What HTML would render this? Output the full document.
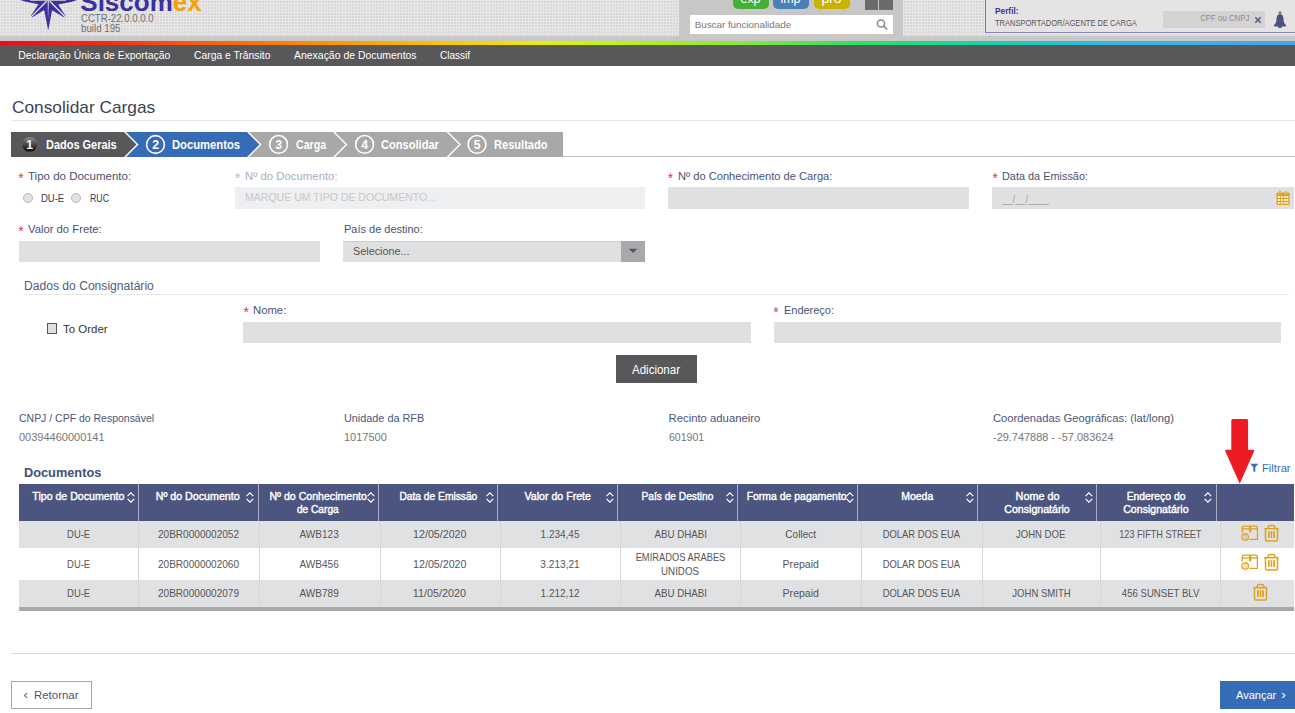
<!DOCTYPE html>
<html><head><meta charset="utf-8"><title>Consolidar Cargas</title>
<style>
html,body{margin:0;padding:0;}
body{width:1295px;height:713px;overflow:hidden;position:relative;background:#fff;font-family:"Liberation Sans",sans-serif;}
.t{position:absolute;white-space:nowrap;line-height:1;}
</style></head><body>
<div style="position:absolute;left:0;top:0;width:1295px;height:36px;background-color:#d8d8d8;background-image:linear-gradient(90deg,#e7e7e7 1px,transparent 1px),linear-gradient(#e7e7e7 1px,transparent 1px);background-size:3px 3px;"></div>
<div style="position:absolute;left:0px;top:36px;width:1295px;height:5px;background:#c9c8c7;"></div>
<div style="position:absolute;left:0px;top:41px;width:1295px;height:4px;background:linear-gradient(90deg,#f00a1a 0%,#f52a12 8%,#fa5010 13%,#ff9000 25%,#fbc000 33%,#f6d800 38%,#eaf000 42%,#c4f800 46%,#a8f018 52%,#80e840 58%,#30e060 66%,#10d8a0 75%,#30b8e0 85%,#42a8ee 100%);"></div>
<div style="position:absolute;left:0px;top:45px;width:1295px;height:21px;background:#58585a;"></div>
<div style="position:absolute;left:679px;top:0px;width:224px;height:36px;background:#c9c7c6;"></div>
<div style="position:absolute;left:733px;top:-8px;width:36px;height:17px;background:#45b035;border-radius:5px;"></div>
<div style="position:absolute;left:773px;top:-8px;width:36px;height:17px;background:#4a80b8;border-radius:5px;"></div>
<div style="position:absolute;left:814px;top:-8px;width:36px;height:17px;background:#c6b400;border-radius:5px;"></div>
<div style="position:absolute;left:865px;top:-5px;width:13px;height:15px;background:#6b6b6b;"></div>
<div style="position:absolute;left:879px;top:-5px;width:14px;height:15px;background:#6b6b6b;"></div>
<div style="position:absolute;left:690px;top:15px;width:203px;height:19px;background:#ffffff;"></div>
<svg style="position:absolute;left:875px;top:17px" width="14" height="14" viewBox="0 0 14 14"><circle cx="6" cy="6.5" r="3.6" fill="none" stroke="#8a8a8a" stroke-width="1.5"/><line x1="8.6" y1="9.1" x2="11.8" y2="12" stroke="#8a8a8a" stroke-width="1.6" stroke-linecap="round"/></svg>
<div style="position:absolute;left:985px;top:0;width:310px;height:33px;background:#e6e3e4;border-left:1px solid #7473ad;border-bottom:1px solid #8584b5;box-sizing:border-box;"></div>
<div style="position:absolute;left:1163px;top:11px;width:102px;height:17px;background:#d4d2d3;"></div>
<svg style="position:absolute;left:1254px;top:16px" width="8" height="8" viewBox="0 0 8 8"><path d="M1.3 1.3L6.7 6.7M6.7 1.3L1.3 6.7" stroke="#5a5a9a" stroke-width="1.6"/></svg>
<svg style="position:absolute;left:1273px;top:11.3px" width="14" height="17" viewBox="0 0 14 17"><circle cx="7" cy="1.9" r="1.1" fill="none" stroke="#4a5580" stroke-width="1"/><path d="M7 3.2C4.4 3.2 3.7 5.3 3.5 7.8L3.2 10.8C3 12.4 1.8 13.1 1.1 13.8C0.5 14.5 0.8 15.6 2 15.6H12C13.2 15.6 13.5 14.5 12.9 13.8C12.2 13.1 11 12.4 10.8 10.8L10.5 7.8C10.3 5.3 9.6 3.2 7 3.2Z" fill="#4a5580"/><ellipse cx="7" cy="15.9" rx="2" ry="1.1" fill="#4a5580"/></svg>
<svg style="position:absolute;left:0;top:0" width="90" height="36" viewBox="0 0 90 36">
<defs><linearGradient id="vh" x1="0" y1="0" x2="0" y2="1"><stop offset="0" stop-color="#fff" stop-opacity="0.95"/><stop offset="1" stop-color="#fff" stop-opacity="0"/></linearGradient></defs>
<path d="M17 -1L26 1.8L38.5 4.3L30.9 15.7L32.4 17.3L44.2 10L48.2 30.5L52.1 10.2L64.2 17.5L65.7 15.9L58.1 4.5L72 1.8L80 -1Z" fill="#3b30a0"/>
<g stroke="#f2f2f2" stroke-width="1.3" opacity="0.95">
<line x1="46.6" y1="1.2" x2="31.4" y2="16.6"/>
<line x1="49.9" y1="1.2" x2="65.1" y2="16.8"/>
</g>
<rect x="47.7" y="0" width="1.1" height="20" fill="url(#vh)"/>
<rect x="30.3" y="0" width="35.7" height="0.9" fill="#c5c5cc"/>
</svg>
<div style="position:absolute;left:11px;top:120px;width:1284px;height:1px;background:#e6e7ec;"></div>
<svg style="position:absolute;left:0;top:0" width="600" height="170" viewBox="0 0 600 170">
<defs><linearGradient id="g1" x1="0" y1="0" x2="0" y2="1"><stop offset="0" stop-color="#8a8a8a"/><stop offset="1" stop-color="#0a0a0a"/></linearGradient></defs>
<polygon points="11,132 124,132 136.5,144.5 124,157 11,157" fill="#58585a"/>
<polygon points="126,132 247,132 259.5,144.5 247,157 126,157 138.5,144.5" fill="#356cb5"/>
<polygon points="249,132 333,132 345.5,144.5 333,157 249,157 261.5,144.5" fill="#a8a8a8"/>
<polygon points="335,132 446.5,132 459,144.5 446.5,157 335,157 347.5,144.5" fill="#a8a8a8"/>
<polygon points="448.5,132 563,132 563,157 448.5,157 461,144.5" fill="#a8a8a8"/>
<rect x="22.3" y="137" width="14.8" height="14.6" rx="6.5" fill="url(#g1)"/>
<circle cx="155.5" cy="144.5" r="8.9" fill="none" stroke="#fff" stroke-width="1.6"/>
<circle cx="278.6" cy="144.4" r="8.9" fill="none" stroke="#fff" stroke-width="1.6"/>
<circle cx="364.6" cy="144.4" r="8.9" fill="none" stroke="#fff" stroke-width="1.6"/>
<circle cx="477" cy="144.4" r="8.9" fill="none" stroke="#fff" stroke-width="1.6"/>
</svg>
<div style="position:absolute;left:563px;top:156px;width:732px;height:1px;background:#c0c0c0;"></div>
<div style="position:absolute;left:23px;top:193px;width:10px;height:10px;border-radius:50%;background:#e2e2e2;border:1px solid #b5b5b5;box-sizing:border-box;"></div>
<div style="position:absolute;left:70.5px;top:193px;width:10px;height:10px;border-radius:50%;background:#e2e2e2;border:1px solid #b5b5b5;box-sizing:border-box;"></div>
<div style="position:absolute;left:235px;top:187px;width:410px;height:22px;background:#eeeff1;"></div>
<div style="position:absolute;left:668px;top:187px;width:301px;height:22px;background:#dfe0e2;"></div>
<div style="position:absolute;left:992px;top:187px;width:302px;height:22px;background:#dfe0e2;"></div>
<svg style="position:absolute;left:1276px;top:190px" width="14" height="16" viewBox="0 0 14 16">
<rect x="0.5" y="2.5" width="13" height="12.5" rx="1" fill="#e0a21a"/>
<rect x="3" y="0.6" width="2" height="3.5" rx="0.8" fill="#e0a21a" stroke="#dfe0e2" stroke-width="0.5"/>
<rect x="9" y="0.6" width="2" height="3.5" rx="0.8" fill="#e0a21a" stroke="#dfe0e2" stroke-width="0.5"/>
<g fill="#f5f0e8"><rect x="1.8" y="6" width="2" height="2"/><rect x="4.8" y="6" width="2" height="2"/><rect x="7.8" y="6" width="2" height="2"/><rect x="10.3" y="6" width="2" height="2"/>
<rect x="1.8" y="9" width="2" height="2"/><rect x="4.8" y="9" width="2" height="2"/><rect x="7.8" y="9" width="2" height="2"/><rect x="10.3" y="9" width="2" height="2"/>
<rect x="1.8" y="12" width="2" height="1.8"/><rect x="4.8" y="12" width="2" height="1.8"/><rect x="7.8" y="12" width="2" height="1.8"/><rect x="10.3" y="12" width="2" height="1.8"/></g>
</svg>
<div style="position:absolute;left:19px;top:241px;width:301px;height:21px;background:#dfe0e2;"></div>
<div style="position:absolute;left:343px;top:241px;width:302px;height:21px;background:#dfe0e2;border-top:1px solid #cfcfcf;box-sizing:border-box;"></div>
<div style="position:absolute;left:621px;top:241px;width:24px;height:21px;background:#a9a9a9;"></div>
<svg style="position:absolute;left:628px;top:248px" width="10" height="6" viewBox="0 0 10 6"><path d="M0.8 0.8L9.2 0.8L5 5Z" fill="#4a5580"/></svg>
<div style="position:absolute;left:23px;top:294px;width:1266px;height:1px;background:#e6e6e6;"></div>
<div style="position:absolute;left:47px;top:323px;width:10px;height:11px;background:#e0e0e0;border:1px solid #555;box-sizing:border-box;"></div>
<div style="position:absolute;left:243px;top:322px;width:508px;height:21px;background:#dfe0e2;"></div>
<div style="position:absolute;left:774px;top:322px;width:507px;height:21px;background:#dfe0e2;"></div>
<div style="position:absolute;left:616px;top:355px;width:81px;height:28px;background:#58585a;"></div>
<svg style="position:absolute;left:1250px;top:463px" width="9" height="10" viewBox="0 0 9 10"><path d="M0.3 0.8L8.3 0.8L5.3 4.3L5.3 9.3L3.3 8L3.3 4.3Z" fill="#3a6db5"/></svg>
<div style="position:absolute;left:19px;top:484px;width:1275px;height:37px;background:#4c5580;"></div>
<div style="position:absolute;left:138px;top:484px;width:1px;height:37px;background:#a9acc2;"></div>
<div style="position:absolute;left:258px;top:484px;width:1px;height:37px;background:#a9acc2;"></div>
<div style="position:absolute;left:378px;top:484px;width:1px;height:37px;background:#a9acc2;"></div>
<div style="position:absolute;left:497px;top:484px;width:1px;height:37px;background:#a9acc2;"></div>
<div style="position:absolute;left:617px;top:484px;width:1px;height:37px;background:#a9acc2;"></div>
<div style="position:absolute;left:737px;top:484px;width:1px;height:37px;background:#a9acc2;"></div>
<div style="position:absolute;left:857px;top:484px;width:1px;height:37px;background:#a9acc2;"></div>
<div style="position:absolute;left:977px;top:484px;width:1px;height:37px;background:#a9acc2;"></div>
<div style="position:absolute;left:1096px;top:484px;width:1px;height:37px;background:#a9acc2;"></div>
<div style="position:absolute;left:1216px;top:484px;width:1px;height:37px;background:#a9acc2;"></div>
<div style="position:absolute;left:19px;top:521px;width:1275px;height:27px;background:#e0e1e3;"></div>
<div style="position:absolute;left:19px;top:580px;width:1275px;height:27px;background:#e0e1e3;"></div>
<div style="position:absolute;left:19px;top:607px;width:1275px;height:4px;background:#a9a9a9;"></div>
<div style="position:absolute;left:138px;top:521px;width:1px;height:86px;background:#d6d6d6;"></div>
<div style="position:absolute;left:259px;top:521px;width:1px;height:86px;background:#d6d6d6;"></div>
<div style="position:absolute;left:380px;top:521px;width:1px;height:86px;background:#d6d6d6;"></div>
<div style="position:absolute;left:500px;top:521px;width:1px;height:86px;background:#d6d6d6;"></div>
<div style="position:absolute;left:620px;top:521px;width:1px;height:86px;background:#d6d6d6;"></div>
<div style="position:absolute;left:740px;top:521px;width:1px;height:86px;background:#d6d6d6;"></div>
<div style="position:absolute;left:861px;top:521px;width:1px;height:86px;background:#d6d6d6;"></div>
<div style="position:absolute;left:982px;top:521px;width:1px;height:86px;background:#d6d6d6;"></div>
<div style="position:absolute;left:1100px;top:521px;width:1px;height:86px;background:#d6d6d6;"></div>
<div style="position:absolute;left:1220px;top:521px;width:1px;height:86px;background:#d6d6d6;"></div>
<svg style="position:absolute;left:126.6px;top:491.8px" width="8" height="11" viewBox="0 0 8 11"><path d="M0.6 4.1L3.9 0.8L7.2 4.1M0.6 6.9L3.9 10.2L7.2 6.9" fill="none" stroke="#fff" stroke-width="1.2"/></svg>
<svg style="position:absolute;left:246.4px;top:491.8px" width="8" height="11" viewBox="0 0 8 11"><path d="M0.6 4.1L3.9 0.8L7.2 4.1M0.6 6.9L3.9 10.2L7.2 6.9" fill="none" stroke="#fff" stroke-width="1.2"/></svg>
<svg style="position:absolute;left:366.6px;top:491.8px" width="8" height="11" viewBox="0 0 8 11"><path d="M0.6 4.1L3.9 0.8L7.2 4.1M0.6 6.9L3.9 10.2L7.2 6.9" fill="none" stroke="#fff" stroke-width="1.2"/></svg>
<svg style="position:absolute;left:486.1px;top:491.8px" width="8" height="11" viewBox="0 0 8 11"><path d="M0.6 4.1L3.9 0.8L7.2 4.1M0.6 6.9L3.9 10.2L7.2 6.9" fill="none" stroke="#fff" stroke-width="1.2"/></svg>
<svg style="position:absolute;left:605.8px;top:491.8px" width="8" height="11" viewBox="0 0 8 11"><path d="M0.6 4.1L3.9 0.8L7.2 4.1M0.6 6.9L3.9 10.2L7.2 6.9" fill="none" stroke="#fff" stroke-width="1.2"/></svg>
<svg style="position:absolute;left:725.8px;top:491.8px" width="8" height="11" viewBox="0 0 8 11"><path d="M0.6 4.1L3.9 0.8L7.2 4.1M0.6 6.9L3.9 10.2L7.2 6.9" fill="none" stroke="#fff" stroke-width="1.2"/></svg>
<svg style="position:absolute;left:846.3px;top:491.8px" width="8" height="11" viewBox="0 0 8 11"><path d="M0.6 4.1L3.9 0.8L7.2 4.1M0.6 6.9L3.9 10.2L7.2 6.9" fill="none" stroke="#fff" stroke-width="1.2"/></svg>
<svg style="position:absolute;left:965.6px;top:491.8px" width="8" height="11" viewBox="0 0 8 11"><path d="M0.6 4.1L3.9 0.8L7.2 4.1M0.6 6.9L3.9 10.2L7.2 6.9" fill="none" stroke="#fff" stroke-width="1.2"/></svg>
<svg style="position:absolute;left:1084.8px;top:491.8px" width="8" height="11" viewBox="0 0 8 11"><path d="M0.6 4.1L3.9 0.8L7.2 4.1M0.6 6.9L3.9 10.2L7.2 6.9" fill="none" stroke="#fff" stroke-width="1.2"/></svg>
<svg style="position:absolute;left:1203.6px;top:491.8px" width="8" height="11" viewBox="0 0 8 11"><path d="M0.6 4.1L3.9 0.8L7.2 4.1M0.6 6.9L3.9 10.2L7.2 6.9" fill="none" stroke="#fff" stroke-width="1.2"/></svg>
<svg style="position:absolute;left:1240px;top:524px" width="20" height="18" viewBox="0 0 20 18"><g fill="none" stroke="#e0a21a" stroke-width="1.3">
<path d="M2.3 8.6V3.6Q2.3 2.1 3.8 2.1H16Q17.4 2.1 17.4 3.6V15.3H9.2"/><path d="M2.3 4.9H17.4"/></g>
<rect x="9" y="2" width="2.3" height="6.3" fill="#e0a21a"/>
<circle cx="5.1" cy="12.9" r="3.3" fill="none" stroke="#e0a21a" stroke-width="1.2"/><path d="M3 14.6L6.8 10.8M3.6 12.2L5.4 10.4M4.8 15.4L7.3 12.9" stroke="#e0a21a" stroke-width="0.8"/></svg>
<svg style="position:absolute;left:1263px;top:524px" width="17" height="19" viewBox="0 0 17 19"><g fill="none" stroke="#e0a21a" stroke-width="1.5">
<path d="M1.2 4.7H15.6"/><path d="M5.2 4.5V3.6Q5.2 1.4 7.4 1.4H9.7Q11.9 1.4 11.9 3.6V4.5"/><path d="M2.5 4.7V15.8Q2.5 17.1 3.8 17.1H13.2Q14.5 17.1 14.5 15.8V4.7"/></g>
<g fill="#e0a21a"><rect x="5" y="7.1" width="1.7" height="6.8"/><rect x="7.7" y="7.1" width="1.5" height="6.8"/><rect x="10.2" y="7.1" width="1.7" height="6.8"/></g></svg>
<svg style="position:absolute;left:1240px;top:553px" width="20" height="18" viewBox="0 0 20 18"><g fill="none" stroke="#e0a21a" stroke-width="1.3">
<path d="M2.3 8.6V3.6Q2.3 2.1 3.8 2.1H16Q17.4 2.1 17.4 3.6V15.3H9.2"/><path d="M2.3 4.9H17.4"/></g>
<rect x="9" y="2" width="2.3" height="6.3" fill="#e0a21a"/>
<circle cx="5.1" cy="12.9" r="3.3" fill="none" stroke="#e0a21a" stroke-width="1.2"/><path d="M3 14.6L6.8 10.8M3.6 12.2L5.4 10.4M4.8 15.4L7.3 12.9" stroke="#e0a21a" stroke-width="0.8"/></svg>
<svg style="position:absolute;left:1263px;top:553px" width="17" height="19" viewBox="0 0 17 19"><g fill="none" stroke="#e0a21a" stroke-width="1.5">
<path d="M1.2 4.7H15.6"/><path d="M5.2 4.5V3.6Q5.2 1.4 7.4 1.4H9.7Q11.9 1.4 11.9 3.6V4.5"/><path d="M2.5 4.7V15.8Q2.5 17.1 3.8 17.1H13.2Q14.5 17.1 14.5 15.8V4.7"/></g>
<g fill="#e0a21a"><rect x="5" y="7.1" width="1.7" height="6.8"/><rect x="7.7" y="7.1" width="1.5" height="6.8"/><rect x="10.2" y="7.1" width="1.7" height="6.8"/></g></svg>
<svg style="position:absolute;left:1251.8px;top:583px" width="17" height="19" viewBox="0 0 17 19"><g fill="none" stroke="#e0a21a" stroke-width="1.5">
<path d="M1.2 4.7H15.6"/><path d="M5.2 4.5V3.6Q5.2 1.4 7.4 1.4H9.7Q11.9 1.4 11.9 3.6V4.5"/><path d="M2.5 4.7V15.8Q2.5 17.1 3.8 17.1H13.2Q14.5 17.1 14.5 15.8V4.7"/></g>
<g fill="#e0a21a"><rect x="5" y="7.1" width="1.7" height="6.8"/><rect x="7.7" y="7.1" width="1.5" height="6.8"/><rect x="10.2" y="7.1" width="1.7" height="6.8"/></g></svg>
<svg style="position:absolute;left:1220px;top:415px" width="40" height="72" viewBox="0 0 40 72"><path d="M12.8 4H26.6Q28.1 4 28.1 5.5V34.7H33.4Q34.6 35.2 34.1 36.3L19.7 68.7L5.3 36.3Q4.8 35.2 6 34.7H11.3V5.5Q11.3 4 12.8 4Z" fill="#ed1c24"/></svg>
<div style="position:absolute;left:11px;top:653px;width:1284px;height:1px;background:#d8d8d8;"></div>
<div style="position:absolute;left:11px;top:681px;width:81px;height:28px;border:1px solid #a5a5a5;box-sizing:border-box;background:#fff"></div>
<div style="position:absolute;left:1220px;top:681px;width:75px;height:28px;background:#356cb5;"></div>
<div class="t" style="left:80.30px;top:-11.11px;font-size:26px;color:#3b30a0;font-weight:bold;"><span style="color:#3b30a0">Siscom</span><span style="color:#f5a00a">ex</span></div>
<div class="t" style="left:80.50px;top:13.83px;font-size:10px;color:#6e6e6e;transform:scaleX(0.9591);transform-origin:left;">CCTR-22.0.0.0.0</div>
<div class="t" style="left:80.50px;top:24.13px;font-size:10px;color:#6e6e6e;transform:scaleX(0.9731);transform-origin:left;">build 195</div>
<div class="t" style="left:740.32px;top:-8.31px;font-size:13px;color:#fff;transform:scaleX(0.9538);transform-origin:center;">exp</div>
<div class="t" style="left:780.32px;top:-8.31px;font-size:13px;color:#fff;transform:scaleX(0.9545);transform-origin:center;">imp</div>
<div class="t" style="left:822.40px;top:-8.31px;font-size:13px;color:#fff;transform:scaleX(1.0640);transform-origin:center;">pro</div>
<div class="t" style="left:694.70px;top:20.20px;font-size:9.8px;color:#777;">Buscar funcionalidade</div>
<div class="t" style="left:994.60px;top:7.12px;font-size:8.6px;color:#3b30a0;font-weight:bold;transform:scaleX(0.9647);transform-origin:left;">Perfil:</div>
<div class="t" style="left:994.60px;top:18.88px;font-size:9px;color:#555;transform:scaleX(0.8356);transform-origin:left;">TRANSPORTADOR/AGENTE DE CARGA</div>
<div class="t" style="left:1195.62px;top:14.30px;font-size:8.5px;color:#8c8c8c;transform:scaleX(0.9218);transform-origin:right;">CPF ou CNPJ</div>
<div class="t" style="left:18.30px;top:50.79px;font-size:10.4px;color:#fff;">Declaração Única de Exportação</div>
<div class="t" style="left:193.70px;top:50.79px;font-size:10.4px;color:#fff;transform:scaleX(0.9944);transform-origin:left;">Carga e Trânsito</div>
<div class="t" style="left:293.50px;top:50.79px;font-size:10.4px;color:#fff;transform:scaleX(1.0058);transform-origin:left;">Anexação de Documentos</div>
<div class="t" style="left:440.20px;top:50.79px;font-size:10.4px;color:#fff;transform:scaleX(0.9619);transform-origin:left;">Classif</div>
<div class="t" style="left:11.80px;top:98.61px;font-size:17px;color:#3c4256;transform:scaleX(1.0171);transform-origin:left;">Consolidar Cargas</div>
<div class="t" style="left:26.36px;top:138.84px;font-size:12px;color:#fff;font-weight:bold;">1</div>
<div class="t" style="left:152.18px;top:139.19px;font-size:12.3px;color:#fff;font-weight:bold;">2</div>
<div class="t" style="left:275.28px;top:139.19px;font-size:12.3px;color:#fff;font-weight:bold;">3</div>
<div class="t" style="left:361.28px;top:139.19px;font-size:12.3px;color:#fff;font-weight:bold;">4</div>
<div class="t" style="left:473.68px;top:139.19px;font-size:12.3px;color:#fff;font-weight:bold;">5</div>
<div class="t" style="left:46.40px;top:138.64px;font-size:12px;color:#fff;font-weight:bold;transform:scaleX(0.9137);transform-origin:left;">Dados Gerais</div>
<div class="t" style="left:172.00px;top:138.64px;font-size:12px;color:#fff;font-weight:bold;transform:scaleX(0.9369);transform-origin:left;">Documentos</div>
<div class="t" style="left:295.70px;top:138.64px;font-size:12px;color:#fff;font-weight:bold;transform:scaleX(0.8849);transform-origin:left;">Carga</div>
<div class="t" style="left:380.50px;top:138.64px;font-size:12px;color:#fff;font-weight:bold;transform:scaleX(0.9239);transform-origin:left;">Consolidar</div>
<div class="t" style="left:493.90px;top:138.64px;font-size:12px;color:#fff;font-weight:bold;transform:scaleX(0.9222);transform-origin:left;">Resultado</div>
<div class="t" style="left:18.30px;top:170.85px;font-size:14px;color:#e8334a;">*</div>
<div class="t" style="left:28.00px;top:170.66px;font-size:11.5px;color:#485273;">Tipo do Documento:</div>
<div class="t" style="left:41.00px;top:192.59px;font-size:11px;color:#333a50;transform:scaleX(0.8628);transform-origin:left;">DU-E</div>
<div class="t" style="left:89.70px;top:192.59px;font-size:11px;color:#333a50;transform:scaleX(0.7969);transform-origin:left;">RUC</div>
<div class="t" style="left:235.00px;top:170.85px;font-size:14px;color:#f2a3ad;">*</div>
<div class="t" style="left:245.00px;top:170.66px;font-size:11.5px;color:#a9aec4;transform:scaleX(0.9882);transform-origin:left;">Nº do Documento:</div>
<div class="t" style="left:245.00px;top:192.39px;font-size:11px;color:#c9c9c9;transform:scaleX(0.9576);transform-origin:left;">MARQUE UM TIPO DE DOCUMENTO...</div>
<div class="t" style="left:667.70px;top:170.85px;font-size:14px;color:#e8334a;">*</div>
<div class="t" style="left:677.80px;top:170.66px;font-size:11.5px;color:#485273;transform:scaleX(0.9677);transform-origin:left;">Nº do Conhecimento de Carga:</div>
<div class="t" style="left:992.40px;top:170.85px;font-size:14px;color:#e8334a;">*</div>
<div class="t" style="left:1002.10px;top:170.66px;font-size:11.5px;color:#485273;transform:scaleX(0.9475);transform-origin:left;">Data da Emissão:</div>
<div class="t" style="left:1002.00px;top:193.69px;font-size:11px;color:#a0a0a0;transform:scaleX(0.8536);transform-origin:left;">__/__/____</div>
<div class="t" style="left:18.30px;top:224.05px;font-size:14px;color:#e8334a;">*</div>
<div class="t" style="left:28.10px;top:223.86px;font-size:11.5px;color:#485273;transform:scaleX(0.9798);transform-origin:left;">Valor do Frete:</div>
<div class="t" style="left:343.80px;top:223.86px;font-size:11.5px;color:#485273;transform:scaleX(0.9553);transform-origin:left;">País de destino:</div>
<div class="t" style="left:352.80px;top:246.19px;font-size:11px;color:#555;transform:scaleX(0.9846);transform-origin:left;">Selecione...</div>
<div class="t" style="left:24.20px;top:279.64px;font-size:12px;color:#4e5b82;transform:scaleX(1.0082);transform-origin:left;">Dados do Consignatário</div>
<div class="t" style="left:63.20px;top:323.73px;font-size:11.3px;color:#333;transform:scaleX(1.0170);transform-origin:left;">To Order</div>
<div class="t" style="left:243.50px;top:305.15px;font-size:14px;color:#e8334a;">*</div>
<div class="t" style="left:253.30px;top:304.96px;font-size:11.5px;color:#485273;transform:scaleX(0.9830);transform-origin:left;">Nome:</div>
<div class="t" style="left:773.30px;top:305.15px;font-size:14px;color:#e8334a;">*</div>
<div class="t" style="left:783.50px;top:304.96px;font-size:11.5px;color:#485273;transform:scaleX(0.9535);transform-origin:left;">Endereço:</div>
<div class="t" style="left:632.20px;top:363.79px;font-size:12.3px;color:#fff;transform:scaleX(0.9363);transform-origin:left;">Adicionar</div>
<div class="t" style="left:19.30px;top:412.93px;font-size:11.3px;color:#4a5578;transform:scaleX(0.9274);transform-origin:left;">CNPJ / CPF do Responsável</div>
<div class="t" style="left:19.30px;top:432.03px;font-size:11.3px;color:#777;transform:scaleX(0.9731);transform-origin:left;">00394460000141</div>
<div class="t" style="left:343.80px;top:412.93px;font-size:11.3px;color:#4a5578;transform:scaleX(0.9601);transform-origin:left;">Unidade da RFB</div>
<div class="t" style="left:343.80px;top:432.03px;font-size:11.3px;color:#777;transform:scaleX(0.9731);transform-origin:left;">1017500</div>
<div class="t" style="left:668.60px;top:412.93px;font-size:11.3px;color:#4a5578;">Recinto aduaneiro</div>
<div class="t" style="left:668.60px;top:432.03px;font-size:11.3px;color:#777;transform:scaleX(0.9336);transform-origin:left;">601901</div>
<div class="t" style="left:992.70px;top:412.93px;font-size:11.3px;color:#4a5578;transform:scaleX(0.9939);transform-origin:left;">Coordenadas Geográficas: (lat/long)</div>
<div class="t" style="left:992.70px;top:432.03px;font-size:11.3px;color:#777;transform:scaleX(0.9688);transform-origin:left;">-29.747888 - -57.083624</div>
<div class="t" style="left:23.60px;top:466.54px;font-size:12px;color:#434d78;font-weight:bold;transform:scaleX(1.0635);transform-origin:left;">Documentos</div>
<div class="t" style="left:1262.00px;top:462.86px;font-size:11.5px;color:#3a6db5;transform:scaleX(0.9731);transform-origin:left;">Filtrar</div>
<div class="t" style="left:32.32px;top:491.12px;font-size:10.6px;color:#fff;-webkit-text-stroke:0.4px #fff;">Tipo de Documento</div>
<div class="t" style="left:156.31px;top:491.12px;font-size:10.6px;color:#fff;transform:scaleX(1.0063);transform-origin:center;-webkit-text-stroke:0.4px #fff;">Nº do Documento</div>
<div class="t" style="left:269.44px;top:491.12px;font-size:10.6px;color:#fff;-webkit-text-stroke:0.4px #fff;">Nº do Conhecimento</div>
<div class="t" style="left:296.40px;top:504.32px;font-size:10.6px;color:#fff;transform:scaleX(0.9589);transform-origin:center;-webkit-text-stroke:0.4px #fff;">de Carga</div>
<div class="t" style="left:397.66px;top:491.12px;font-size:10.6px;color:#fff;transform:scaleX(0.9656);transform-origin:center;-webkit-text-stroke:0.4px #fff;">Data de Emissão</div>
<div class="t" style="left:524.58px;top:491.12px;font-size:10.6px;color:#fff;-webkit-text-stroke:0.4px #fff;">Valor do Frete</div>
<div class="t" style="left:640.05px;top:491.12px;font-size:10.6px;color:#fff;transform:scaleX(0.9613);transform-origin:center;-webkit-text-stroke:0.4px #fff;">País de Destino</div>
<div class="t" style="left:746.35px;top:491.12px;font-size:10.6px;color:#fff;transform:scaleX(0.9872);transform-origin:center;-webkit-text-stroke:0.4px #fff;">Forma de pagamento</div>
<div class="t" style="left:901.05px;top:491.12px;font-size:10.6px;color:#fff;transform:scaleX(0.9905);transform-origin:center;-webkit-text-stroke:0.4px #fff;">Moeda</div>
<div class="t" style="left:1015.50px;top:491.12px;font-size:10.6px;color:#fff;transform:scaleX(1.0186);transform-origin:center;-webkit-text-stroke:0.4px #fff;">Nome do</div>
<div class="t" style="left:1004.31px;top:504.32px;font-size:10.6px;color:#fff;-webkit-text-stroke:0.4px #fff;">Consignatário</div>
<div class="t" style="left:1125.86px;top:491.12px;font-size:10.6px;color:#fff;transform:scaleX(0.9787);transform-origin:center;-webkit-text-stroke:0.4px #fff;">Endereço do</div>
<div class="t" style="left:1123.21px;top:504.32px;font-size:10.6px;color:#fff;-webkit-text-stroke:0.4px #fff;">Consignatário</div>
<div class="t" style="left:66.11px;top:529.68px;font-size:10.3px;color:#555555;transform:scaleX(0.9137);transform-origin:center;">DU-E</div>
<div class="t" style="left:157.08px;top:529.68px;font-size:10.3px;color:#555555;transform:scaleX(0.9767);transform-origin:center;">20BR0000002052</div>
<div class="t" style="left:299.07px;top:529.68px;font-size:10.3px;color:#555555;transform:scaleX(0.9760);transform-origin:center;">AWB123</div>
<div class="t" style="left:413.73px;top:529.68px;font-size:10.3px;color:#555555;transform:scaleX(1.0360);transform-origin:center;">12/05/2020</div>
<div class="t" style="left:539.95px;top:529.68px;font-size:10.3px;color:#555555;transform:scaleX(0.9702);transform-origin:center;">1.234,45</div>
<div class="t" style="left:652.74px;top:529.68px;font-size:10.3px;color:#555555;transform:scaleX(0.9475);transform-origin:center;">ABU DHABI</div>
<div class="t" style="left:785.06px;top:529.68px;font-size:10.3px;color:#555555;transform:scaleX(0.9814);transform-origin:center;">Collect</div>
<div class="t" style="left:878.96px;top:529.68px;font-size:10.3px;color:#555555;transform:scaleX(0.9139);transform-origin:center;">DOLAR DOS EUA</div>
<div class="t" style="left:1014.39px;top:529.68px;font-size:10.3px;color:#555555;transform:scaleX(0.9264);transform-origin:center;">JOHN DOE</div>
<div class="t" style="left:1114.06px;top:529.68px;font-size:10.3px;color:#555555;transform:scaleX(0.8869);transform-origin:center;">123 FIFTH STREET</div>
<div class="t" style="left:66.11px;top:559.68px;font-size:10.3px;color:#555555;transform:scaleX(0.9137);transform-origin:center;">DU-E</div>
<div class="t" style="left:157.08px;top:559.68px;font-size:10.3px;color:#555555;transform:scaleX(0.9767);transform-origin:center;">20BR0000002060</div>
<div class="t" style="left:299.07px;top:559.68px;font-size:10.3px;color:#555555;transform:scaleX(0.9760);transform-origin:center;">AWB456</div>
<div class="t" style="left:413.73px;top:559.68px;font-size:10.3px;color:#555555;transform:scaleX(1.0360);transform-origin:center;">12/05/2020</div>
<div class="t" style="left:539.95px;top:559.68px;font-size:10.3px;color:#555555;transform:scaleX(0.9827);transform-origin:center;">3.213,21</div>
<div class="t" style="left:783.05px;top:559.68px;font-size:10.3px;color:#555555;transform:scaleX(1.0225);transform-origin:center;">Prepaid</div>
<div class="t" style="left:878.96px;top:559.68px;font-size:10.3px;color:#555555;transform:scaleX(0.9139);transform-origin:center;">DOLAR DOS EUA</div>
<div class="t" style="left:66.11px;top:588.78px;font-size:10.3px;color:#555555;transform:scaleX(0.9137);transform-origin:center;">DU-E</div>
<div class="t" style="left:157.08px;top:588.78px;font-size:10.3px;color:#555555;transform:scaleX(0.9767);transform-origin:center;">20BR0000002079</div>
<div class="t" style="left:299.07px;top:588.78px;font-size:10.3px;color:#555555;transform:scaleX(0.9760);transform-origin:center;">AWB789</div>
<div class="t" style="left:414.11px;top:588.78px;font-size:10.3px;color:#555555;transform:scaleX(1.0516);transform-origin:center;">11/05/2020</div>
<div class="t" style="left:539.95px;top:588.78px;font-size:10.3px;color:#555555;transform:scaleX(0.9727);transform-origin:center;">1.212,12</div>
<div class="t" style="left:652.74px;top:588.78px;font-size:10.3px;color:#555555;transform:scaleX(0.9475);transform-origin:center;">ABU DHABI</div>
<div class="t" style="left:783.05px;top:588.78px;font-size:10.3px;color:#555555;transform:scaleX(1.0225);transform-origin:center;">Prepaid</div>
<div class="t" style="left:878.96px;top:588.78px;font-size:10.3px;color:#555555;transform:scaleX(0.9139);transform-origin:center;">DOLAR DOS EUA</div>
<div class="t" style="left:1009.53px;top:588.78px;font-size:10.3px;color:#555555;transform:scaleX(0.9263);transform-origin:center;">JOHN SMITH</div>
<div class="t" style="left:1118.81px;top:588.78px;font-size:10.3px;color:#555555;transform:scaleX(0.9328);transform-origin:center;">456 SUNSET BLV</div>
<div class="t" style="left:631.00px;top:552.78px;font-size:10.3px;color:#555555;transform:scaleX(0.9061);transform-origin:center;">EMIRADOS ARABES</div>
<div class="t" style="left:660.48px;top:566.68px;font-size:10.3px;color:#555555;transform:scaleX(0.9464);transform-origin:center;">UNIDOS</div>
<div class="t" style="left:23.50px;top:688.49px;font-size:13px;color:#4a5578;">‹</div>
<div class="t" style="left:34.30px;top:689.69px;font-size:11px;color:#4a5578;transform:scaleX(1.0398);transform-origin:left;">Retornar</div>
<div class="t" style="left:1236.00px;top:689.83px;font-size:11.3px;color:#fff;transform:scaleX(0.9770);transform-origin:left;">Avançar</div>
<div class="t" style="left:1281.30px;top:688.37px;font-size:13.5px;color:#fff;">›</div>
</body></html>
